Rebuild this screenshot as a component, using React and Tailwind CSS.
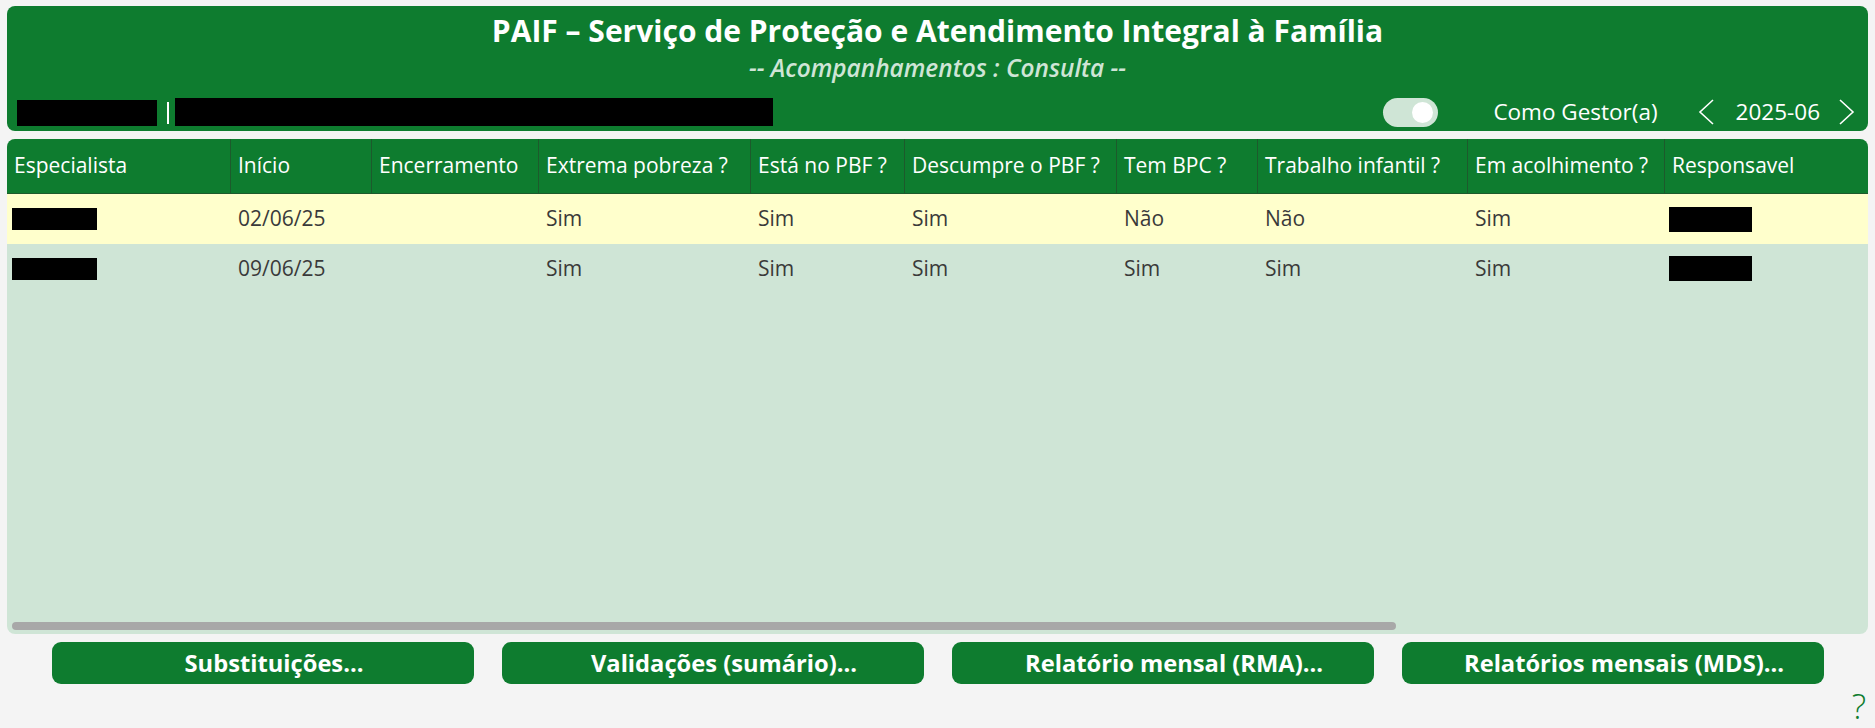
import React from 'react';

const columns = [
  { label: 'Especialista', w: 'w-[224px]' },
  { label: 'Início', w: 'w-[141px]' },
  { label: 'Encerramento', w: 'w-[167px]' },
  { label: 'Extrema pobreza ?', w: 'w-[212px]' },
  { label: 'Está no PBF ?', w: 'w-[154px]' },
  { label: 'Descumpre o PBF ?', w: 'w-[212px]' },
  { label: 'Tem BPC ?', w: 'w-[141px]' },
  { label: 'Trabalho infantil ?', w: 'w-[210px]' },
  { label: 'Em acolhimento ?', w: 'w-[197px]' },
  { label: 'Responsavel', w: 'flex-1' },
];

const rows = [
  { bg: 'bg-[#ffffcc]', h: 'h-[50px]', values: ['02/06/25', '', 'Sim', 'Sim', 'Sim', 'Não', 'Não', 'Sim'] },
  { bg: 'bg-[#cfe5d6]', h: 'h-[49px]', values: ['09/06/25', '', 'Sim', 'Sim', 'Sim', 'Sim', 'Sim', 'Sim'] },
];

const buttons = ['Substituições...', 'Validações (sumário)...', 'Relatório mensal (RMA)...', 'Relatórios mensais (MDS)...'];

const Chevron = ({ dir }) => (
  <svg width="18" height="28" viewBox="0 0 18 28" fill="none" stroke="white" strokeWidth="1.6">
    {dir === 'left' ? <polyline points="15,2 2,14 15,26" /> : <polyline points="3,2 16,14 3,26" />}
  </svg>
);

const App = () => {
  return (
    <div className="w-full h-[728px] bg-[#f4f4f4] flex flex-col px-[7px] pt-[6px] font-['Open_Sans',sans-serif] overflow-hidden">
      {/* Cabeçalho */}
      <div className="h-[125px] bg-[#0e7c2f] rounded-[8px] flex flex-col">
        <div className="h-[38px] mt-[6px] text-center text-white font-bold text-[30px] leading-[38px]">
          PAIF – Serviço de Proteção e Atendimento Integral à Família
        </div>
        <div className="h-[30px] mt-[3px] text-center text-[#cfe5d6] italic font-semibold text-[24.4px] leading-[30px]">
          -- Acompanhamentos : Consulta --
        </div>
        <div className="h-[28px] mt-[15px] flex items-center pl-[10px] pr-[13px]">
          <div className="w-[140px] h-[26px] bg-black mt-[2px]" />
          <div className="w-[2px] h-[22px] bg-white ml-[10px] mt-[2px]" />
          <div className="w-[598px] h-[28px] bg-black ml-[6px]" />
          <div className="flex-1" />
          <div className="w-[55px] h-[29px] rounded-full bg-[#cfe5d6] flex items-center justify-end pr-[5px]">
            <div className="w-[21px] h-[21px] rounded-full bg-white" />
          </div>
          <div className="ml-[55px] text-white text-[22.5px] leading-[28px]">Como Gestor(a)</div>
          <div className="ml-[40px] flex items-center">
            <Chevron dir="left" />
          </div>
          <div className="ml-[20px] text-white text-[22.5px] leading-[28px]">2025-06</div>
          <div className="ml-[17px] flex items-center">
            <Chevron dir="right" />
          </div>
        </div>
      </div>

      {/* Tabela */}
      <div className="h-[495px] mt-[8px] bg-[#cfe5d6] rounded-[8px] flex flex-col overflow-hidden">
        <div className="h-[55px] bg-[#0e7c2f] flex border-b border-[#1d5a2c]">
          {columns.map((c, i) => (
            <div
              key={c.label}
              className={`${c.w} h-full flex items-center pl-[7px] text-white text-[21px] ${i < columns.length - 1 ? 'border-r border-[#1d5a2c]' : ''}`}
            >
              {c.label}
            </div>
          ))}
        </div>
        {rows.map((r, ri) => (
          <div key={ri} className={`${r.h} ${r.bg} flex`}>
            <div className="w-[224px] h-full flex items-center pl-[5px]">
              <div className="w-[85px] h-[22px] bg-black" />
            </div>
            {r.values.map((v, vi) => (
              <div
                key={vi}
                className={`${columns[vi + 1].w} h-full flex items-center pl-[7px] text-[#3a3a3a] text-[21px]`}
              >
                {v}
              </div>
            ))}
            <div className="flex-1 h-full flex items-center pl-[4px]">
              <div className="w-[83px] h-[25px] bg-black" />
            </div>
          </div>
        ))}
        <div className="flex-1" />
        <div className="h-[8px] w-[1384px] ml-[5px] mb-[4px] rounded-full bg-[#a8a8a8]" />
      </div>

      {/* Botões */}
      <div className="mt-[8px] flex gap-[28px] pl-[45px]">
        {buttons.map((b) => (
          <button
            key={b}
            className="w-[422px] h-[42px] rounded-[9px] bg-[#0e7c2f] text-white font-bold text-[23.7px] leading-[42px] pl-[22px]"
          >
            {b}
          </button>
        ))}
      </div>

      <div className="flex justify-end pr-[2px] mt-[7px]">
        <span className="text-[#0e7c2f] text-[34px] font-light leading-[30px]">?</span>
      </div>
    </div>
  );
};

export default App;
